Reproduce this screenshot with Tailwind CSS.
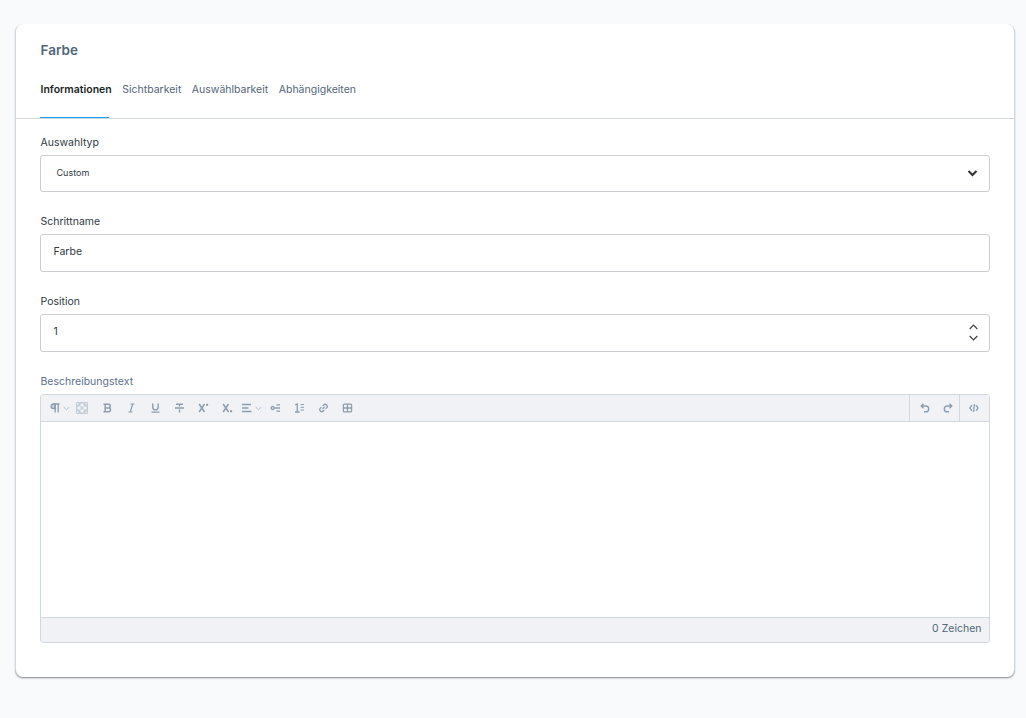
<!DOCTYPE html>
<html lang="de">
<head>
  <meta charset="UTF-8">
  <meta name="viewport" content="width=device-width, initial-scale=1.0">
  <title>Farbe</title>
  <script src="https://cdn.jsdelivr.net/npm/@tailwindcss/browser@4"></script>
</head>
<body class="bg-[#f9fafc] h-[718px] overflow-hidden pt-6 pl-[15px] pr-[11px] font-['Inter',sans-serif] text-[10.5px] leading-[18px] text-[#303a45]">
  <main class="h-[653px] bg-white rounded-lg border-x border-[#d1d9e0] shadow-[0_1px_1px_rgba(0,0,0,0.3),0_2px_2px_rgba(0,0,0,0.12)]">
    <header class="h-[95px] px-6 pt-4 border-b border-[#d1d9e0]">
      <h1 class="pl-[0.5px] text-[13.5px] leading-5 font-semibold text-[#52667a]">Farbe</h1>
      <nav class="mt-[21px] flex gap-[10.5px] text-[#52667a]">
        <a href="#" class="relative h-[37px] pl-[0.5px] font-semibold text-[#1a1f25]">Informationen
          <span class="absolute left-0 bottom-0 w-[69px] h-px bg-[#189eff]"></span>
        </a>
        <a href="#">Sichtbarkeit</a>
        <a href="#">Auswählbarkeit</a>
        <a href="#">Abhängigkeiten</a>
      </nav>
    </header>

    <form class="px-6 pt-[15px]">
      <div class="h-[79px]">
        <label class="block pl-[0.5px]">Auswahltyp</label>
        <div class="mt-[3px] h-[37px] pl-[15.5px] pr-[11px] pb-[2px] flex items-center justify-between border border-[#cbcdd1] rounded-[3px]">
          <span class="text-[9px]">Custom</span>
          <svg class="w-[11px] h-[10px]" viewBox="-.5 0 11 10" fill="none" stroke="#303236" stroke-width="2"><path d="M1 3l4 4 4-4"/></svg>
        </div>
      </div>

      <div class="h-20">
        <label class="block pl-[0.5px]">Schrittname</label>
        <div class="mt-[3px] h-[38px] pl-[12.5px] pt-2 border border-[#cbcdd1] rounded-[3px]">Farbe</div>
      </div>

      <div class="h-20">
        <label class="block pl-[0.5px]">Position</label>
        <div class="mt-[3px] h-[38px] pl-[12.5px] pr-[10px] flex justify-between border border-[#cbcdd1] rounded-[3px]">
          <span class="pt-2">1</span>
          <svg class="w-[11px] h-[18px] mt-[9px]" viewBox="-.5 0 11 18" fill="none" stroke="#3c3e42" stroke-width="1.2"><path d="M1.2 5L5 1.2 8.8 5M1.2 12L5 15.8 8.8 12"/></svg>
        </div>
      </div>

      <label class="block pl-[0.5px] text-[#5d7090]">Beschreibungstext</label>
      <div class="mt-[3px] h-[249px] flex flex-col border border-[#d1d9e0] rounded-[3px] overflow-hidden">
        <!-- Toolbar -->
        <div class="h-[27px] shrink-0 pl-[0.5px] flex border-b border-[#d1d9e0] bg-[#f0f2f5] text-[#8c9eb0]">
          <div class="w-7 pl-2 flex items-center gap-[3px]">
            <svg class="w-[10px] h-[10px]" viewBox="0 0 10 10" fill="none" stroke="currentColor" stroke-width="1.3"><path d="M3.5 1h6M5.2 1v8.5M8.2 1v8.5"/><path d="M5 1H3.3a2.2 2.2 0 0 0 0 4.5H5z" stroke-width="1.3" fill="currentColor" fill-opacity=".4"/></svg>
            <svg class="w-[7px] h-[7px] shrink-0" viewBox="0 0 7 7" fill="none" stroke="#b4c0cb"><path d="M.7 2l2.8 2.8L6.3 2"/></svg>
          </div>
          <div class="w-[25px] flex items-center justify-center">
            <svg class="w-3 h-3" viewBox="0 0 12 12"><rect width="12" height="12" rx="1" fill="#c4ced6"/><path fill="#f0f2f5" d="M4.5 1.5h3v3h-3zM1.5 4.5h3v3h-3zM7.5 4.5h3v3h-3zM4.5 7.5h3v3h-3zM1 1h1.5v1.5H1zM9.5 1H11v1.5H9.5zM1 9.5h1.5V11H1zM9.5 9.5H11V11H9.5z"/></svg>
          </div>
          <div class="w-6 ml-px flex items-center justify-center">
            <svg class="w-[11px] h-[10px]" viewBox="-.5 0 11 10" fill="none" stroke="currentColor" stroke-width="1.5"><path d="M1 1.2h5a1.8 1.8 0 0 1 0 3.7H2.7M6 4.9h.6a2 2 0 0 1 0 3.9H1M2.7 1v8"/></svg>
          </div>
          <div class="w-6 flex items-center justify-center">
            <svg class="w-[11px] h-[10px]" viewBox="-.5 0 11 10" fill="none" stroke="currentColor" stroke-width="1.2"><path d="M4 1h4M2 9h4M6.2 1L3.8 9"/></svg>
          </div>
          <div class="w-6 flex items-center justify-center">
            <svg class="w-[11px] h-[10px]" viewBox="-.5 0 11 10" fill="none" stroke="currentColor" stroke-width="1.4"><path d="M2.3 .5v3.7a2.7 2.7 0 0 0 5.4 0V.5"/><path d="M1 9.2h8" stroke-width="1.2"/></svg>
          </div>
          <div class="w-6 flex items-center justify-center">
            <svg class="w-[11px] h-[10px]" viewBox="-.5 0 11 10" fill="none" stroke="currentColor" stroke-width="1.4"><path d="M1.5 1.2h7M5 1v2.5M5 6.5v3M.5 5h9"/></svg>
          </div>
          <div class="w-6 flex items-center justify-center">
            <svg class="w-[11px] h-[10px]" viewBox="-.5 0 11 10" fill="none" stroke="currentColor" stroke-width="1.5"><path d="M.7 1l5.3 8M6 1L.7 9"/><path d="M8.6 .8v2" stroke-width="2"/></svg>
          </div>
          <div class="w-6 flex items-center justify-center">
            <svg class="w-[11px] h-[10px]" viewBox="-.5 0 11 10" fill="none" stroke="currentColor" stroke-width="1.5"><path d="M.7 1l5.3 8M6 1L.7 9"/><path d="M8.6 7.3v2" stroke-width="2"/></svg>
          </div>
          <div class="w-6 pl-[2px] flex items-center gap-[2px]">
            <svg class="w-[11px] h-[10px] shrink-0" viewBox="0.5 0 11 10" fill="none" stroke="currentColor" stroke-width="1.3"><path d="M.5 1.5h9M.5 5h6.5M.5 8.5H10"/></svg>
            <svg class="w-[7px] h-[7px] shrink-0" viewBox="0 0 7 7" fill="none" stroke="#b4c0cb"><path d="M.7 2l2.8 2.8L6.3 2"/></svg>
          </div>
          <div class="w-6 flex items-center justify-center">
            <svg class="w-[11px] h-[10px]" viewBox="-.5 0 11 10" fill="none" stroke="currentColor" stroke-width="1.3"><circle cx="2.2" cy="5" r="1.5"/><path d="M6 1.8h3.5M4 5h5.5M6 8.2h3.5"/></svg>
          </div>
          <div class="w-6 flex items-center justify-center">
            <svg class="w-[11px] h-[10px]" viewBox="-.5 0 11 10" fill="none" stroke="currentColor" stroke-width="1.3"><path d="M.7 1.8L2.8 1v8M.5 9h4.7"/><path d="M6 1.5h3.5M6 4.2h3.5M6 7h3.5" stroke-width="1.1"/></svg>
          </div>
          <div class="w-6 flex items-center justify-center">
            <svg class="w-[11px] h-[10px]" viewBox="-.5 0 11 10" fill="none" stroke="currentColor" stroke-width="1.3"><path d="M4 6L6 4M4.2 3l1-1a2 2 0 0 1 2.9 2.9l-1 1M5.8 7l-1 1a2 2 0 0 1-2.9-2.9l1-1"/></svg>
          </div>
          <div class="w-6 flex items-center justify-center">
            <svg class="w-[11px] h-[10px]" viewBox="-.5 0 11 10" fill="none" stroke="currentColor" stroke-width="1.3"><rect x=".9" y="1.1" width="8.2" height="7.8" rx="1"/><path d="M5 1v8M1 5h8"/></svg>
          </div>
          <div class="ml-auto w-[51px] pl-[3px] flex border-l border-[#d1d9e0]">
            <div class="w-6 flex items-center justify-center">
              <svg class="w-[10px] h-[10px]" viewBox="0 0 10 10" fill="none" stroke="currentColor" stroke-width="1.4"><path d="M3.5 .7L1.2 3l2.3 2.3M1.5 3h4.3a2.9 2.9 0 0 1 0 5.8H4"/></svg>
            </div>
            <div class="w-6 flex items-center justify-center">
              <svg class="w-[10px] h-[10px]" viewBox="0 0 10 10" fill="none" stroke="currentColor" stroke-width="1.4"><path d="M6.5 .7L8.8 3 6.5 5.3M8.5 3H4.2a2.9 2.9 0 0 0 0 5.8H6"/></svg>
            </div>
          </div>
          <div class="w-[30px] flex items-center justify-center border-l border-[#d1d9e0] -ml-px">
            <svg class="w-[11px] h-[10px]" viewBox="0 0 11 10" fill="none" stroke="currentColor" stroke-width="1.3"><path d="M2.9 2.2L.9 5l2 2.8M7.1 2.2l2 2.8-2 2.8M5.5 1.2l-1 7.6"/></svg>
          </div>
        </div>
        <div class="flex-1"></div>
        <div class="h-[25px] shrink-0 pr-[7.5px] pt-[2px] text-right border-t border-[#d1d9e0] bg-[#f0f2f5] text-[#52667a]">0 Zeichen</div>
      </div>
    </form>
  </main>
</body>
</html>
